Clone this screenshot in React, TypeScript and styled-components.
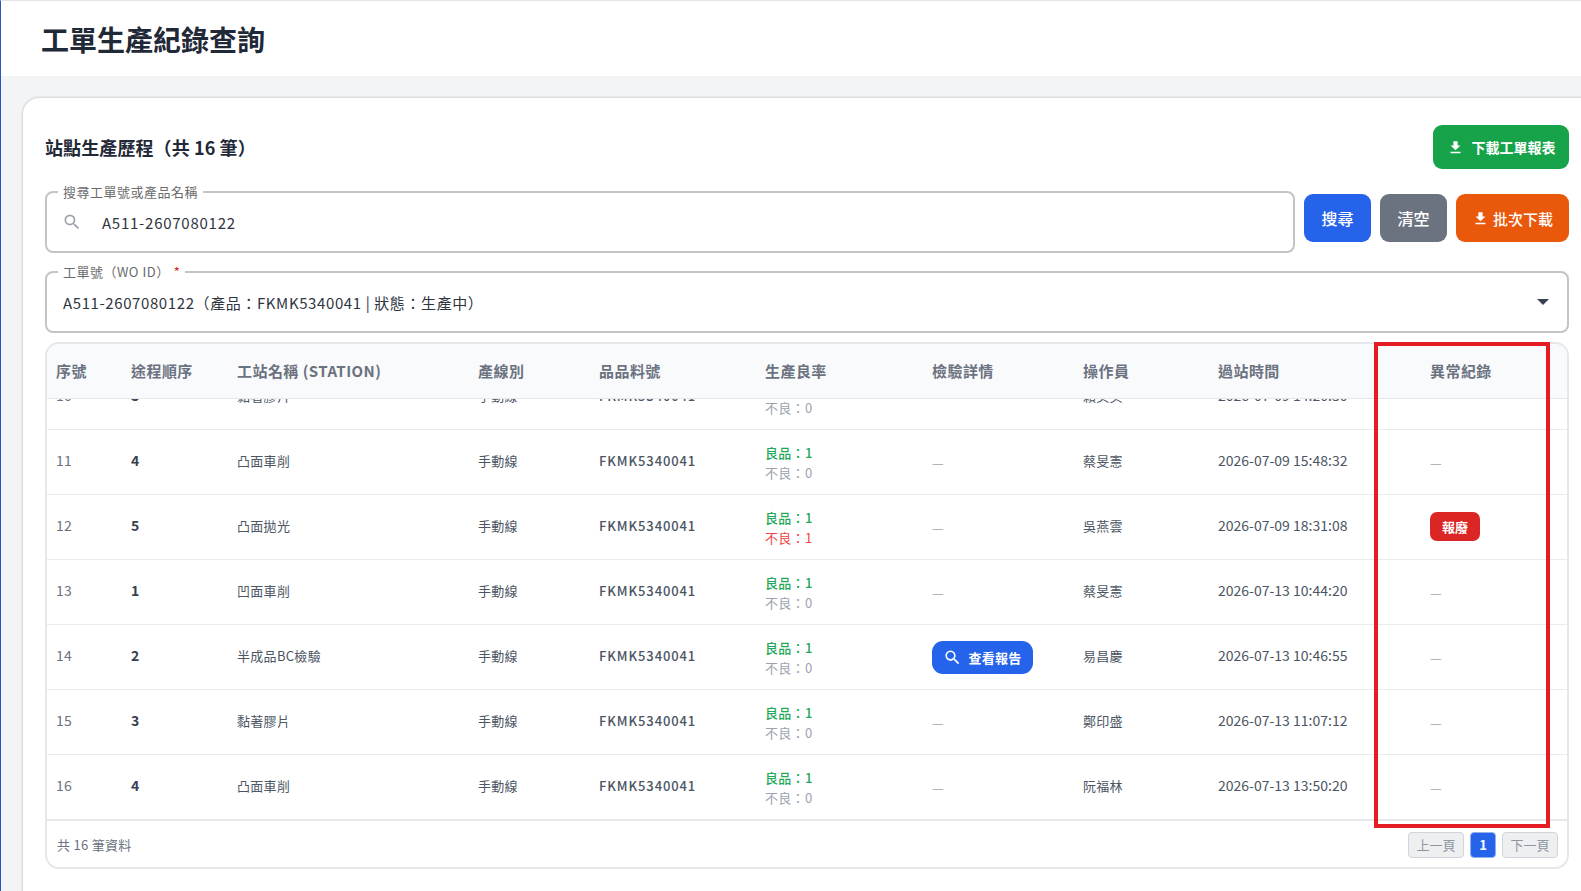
import React from "react";
import styled, { createGlobalStyle } from "styled-components";
import { MdDownload, MdSearch } from "react-icons/md";

const GlobalStyle = createGlobalStyle`
  html, body {
    margin: 0;
    padding: 0;
    height: 100%;
    overflow: hidden;
    background: #f3f4f6;
    font-family: "Noto Sans CJK TC", "Noto Sans", sans-serif;
  }
  * { box-sizing: border-box; }
`;

const Page = styled.div`
  width: 1581px;
  height: 891px;
  overflow: hidden;
  background: #f3f4f6;
  border-left: 1px solid #2b55c5;
  border-top: 1px solid #e5e5e8;
`;

const PageHeader = styled.header`
  height: 75px;
  background: #fff;
  display: flex;
  align-items: center;
  padding-left: 40px;
`;

const PageTitle = styled.h1`
  margin: 0;
  font-size: 28px;
  font-weight: 700;
  color: #1f2937;
`;

const Card = styled.main`
  margin: 22px 0 0 22px;
  width: 1580px;
  height: 900px;
  background: #fff;
  border-radius: 16px;
  box-shadow: 0 0 3px rgba(0, 0, 0, 0.28);
  padding: 27px 0 0 22px;
`;

const Inner = styled.div`
  width: 1524px;
`;

const TitleRow = styled.div`
  display: flex;
  justify-content: space-between;
  align-items: center;
  height: 44px;
  margin-bottom: 15px;
`;

const SectionTitle = styled.h2`
  margin: 0;
  font-size: 18px;
  font-weight: 700;
  color: #1f2937;
  letter-spacing: 0.1px;
`;

const ActionButton = styled.button<{ $bg: string; $w: number; $h: number; $size: number; $weight: number; $gap: number }>`
  width: ${(p) => p.$w}px;
  height: ${(p) => p.$h}px;
  background: ${(p) => p.$bg};
  border: 0;
  border-radius: 9px;
  color: #fff;
  font-family: inherit;
  font-size: ${(p) => p.$size}px;
  font-weight: ${(p) => p.$weight};
  display: inline-flex;
  align-items: center;
  justify-content: center;
  gap: ${(p) => p.$gap}px;
  padding: 0;
`;

const SearchRow = styled.div`
  display: flex;
  align-items: flex-start;
  gap: 9px;
  margin-bottom: 11px;
`;

const Field = styled.fieldset<{ $grow?: boolean }>`
  margin: 0;
  height: 69px;
  padding: 0 16px;
  border: 2px solid #c4c4c4;
  border-radius: 8px;
  display: flex;
  align-items: center;
  flex: ${(p) => (p.$grow ? "1" : "none")};
  min-width: 0;
`;

const Legend = styled.legend`
  padding: 0 5px;
  margin-left: -5px;
  font-size: 13px;
  line-height: 16px;
  color: #6b6b6b;
  letter-spacing: 0.5px;
`;

const Required = styled.span`
  color: #e02424;
  margin-left: 4px;
`;

const FieldText = styled.span<{ $up: number; $spacing: number }>`
  font-size: 15px;
  color: #2f3640;
  letter-spacing: ${(p) => p.$spacing}px;
  margin-top: -${(p) => p.$up}px;
`;

const FieldIcon = styled(MdSearch)`
  color: #9ca3af;
  margin: -7px 20px 0 -1px;
  flex: none;
`;

const Buttons = styled.div`
  display: flex;
  gap: 9px;
  padding-top: 10px;
`;

const Caret = styled.span`
  width: 0;
  height: 0;
  border-left: 6px solid transparent;
  border-right: 6px solid transparent;
  border-top: 6px solid #374151;
  margin: -7px 2px 0 auto;
`;

const TableWrap = styled.section`
  position: relative;
  margin-top: 9px;
`;

const TableBox = styled.div`
  height: 527px;
  border: 2px solid #e5e7eb;
  border-radius: 14px;
  overflow: hidden;
  display: flex;
  flex-direction: column;
  background: #fff;
`;

const columns = "74px 106px 241px 121px 165px 167px 150px 135px 211px 131px 19px";

const HeadRow = styled.div`
  display: grid;
  grid-template-columns: ${columns};
  height: 55px;
  flex: none;
  background: #f9fafb;
  border-bottom: 1px solid #e5e7eb;
  align-items: center;
`;

const HeadCell = styled.div<{ $pad: number }>`
  padding-left: ${(p) => p.$pad}px;
  padding-bottom: 2px;
  font-size: 15px;
  font-weight: 700;
  color: #6b7280;
  letter-spacing: 0.45px;
`;

const Body = styled.div`
  flex: 1;
  min-height: 0;
  overflow: hidden;
  display: flex;
  flex-direction: column;
  justify-content: flex-end;
`;

const Row = styled.div`
  display: grid;
  grid-template-columns: ${columns};
  height: 65px;
  flex: none;
  align-items: center;
  border-bottom: 1px solid #e9ebef;
`;

const Cell = styled.div<{ $pad: number }>`
  padding-left: ${(p) => p.$pad}px;
  padding-bottom: 4px;
  font-size: 13px;
  color: #4b5563;
  letter-spacing: 0.3px;
`;

const IndexCell = styled(Cell)`
  color: #6b7280;
  font-size: 14px;
`;

const StepCell = styled(Cell)`
  color: #374151;
  font-weight: 700;
  font-size: 14px;
`;

const PartCell = styled(Cell)`
  font-weight: 500;
  letter-spacing: 0.9px;
`;

const TimeCell = styled(Cell)`
  font-size: 14px;
  letter-spacing: 0;
`;

const YieldCell = styled(Cell)`
  padding-bottom: 0;
  padding-top: 1px;
`;

const Yield = styled.div`
  display: flex;
  flex-direction: column;
  line-height: 20px;
`;

const Good = styled.span`
  color: #22a958;
  font-weight: 500;
`;

const Bad = styled.span<{ $hit: boolean }>`
  color: ${(p) => (p.$hit ? "#ef4444" : "#9ca3af")};
`;

const Dash = styled.span`
  color: #9ca3af;
  display: block;
  position: relative;
  top: 2px;
`;

const ReportButton = styled.span`
  width: 101px;
  height: 33px;
  background: #2563eb;
  color: #fff;
  border-radius: 11px;
  font-weight: 700;
  display: inline-flex;
  align-items: center;
  justify-content: center;
  gap: 6px;
  position: relative;
  top: 2px;
`;

const ScrapBadge = styled.span`
  width: 50px;
  height: 29px;
  background: #dc2626;
  color: #fff;
  border-radius: 7px;
  font-size: 13px;
  font-weight: 700;
  letter-spacing: 0;
  display: inline-flex;
  align-items: center;
  justify-content: center;
  position: relative;
  top: 1px;
`;

const Footer = styled.div`
  height: 47px;
  flex: none;
  display: flex;
  align-items: center;
  justify-content: space-between;
  padding: 1px 9px 0 10px;
  border-top: 1px solid #e5e7eb;
`;

const FooterText = styled.span`
  font-size: 13px;
  color: #6b7280;
  letter-spacing: 0.3px;
`;

const Pager = styled.div`
  display: flex;
  gap: 6px;
  align-items: center;
`;

const PageButton = styled.span<{ $active?: boolean }>`
  height: 26px;
  min-width: ${(p) => (p.$active ? 26 : 56)}px;
  border-radius: 4px;
  border: 1px solid ${(p) => (p.$active ? "#93b0ea" : "#d1d5db")};
  background: ${(p) => (p.$active ? "#2563eb" : "#eeeff1")};
  color: ${(p) => (p.$active ? "#fff" : "#8f96a1")};
  font-size: 13px;
  font-weight: ${(p) => (p.$active ? 700 : 400)};
  display: inline-flex;
  align-items: center;
  justify-content: center;
`;

const Highlight = styled.div`
  position: absolute;
  left: 1329px;
  top: 0;
  width: 176px;
  height: 486px;
  border: 4px solid #e51c23;
  pointer-events: none;
`;

type Rec = {
  no: number;
  step: number;
  station: string;
  ng: number;
  op: string;
  time: string;
  report?: boolean;
  scrap?: boolean;
  blank?: boolean;
};

const rows: Rec[] = [
  { no: 10, step: 3, station: "黏著膠片", ng: 0, op: "賴美英", time: "2026-07-09 14:20:50", blank: true },
  { no: 11, step: 4, station: "凸面車削", ng: 0, op: "蔡旻憲", time: "2026-07-09 15:48:32" },
  { no: 12, step: 5, station: "凸面拋光", ng: 1, op: "吳燕雲", time: "2026-07-09 18:31:08", scrap: true },
  { no: 13, step: 1, station: "凹面車削", ng: 0, op: "蔡旻憲", time: "2026-07-13 10:44:20" },
  { no: 14, step: 2, station: "半成品BC檢驗", ng: 0, op: "易昌慶", time: "2026-07-13 10:46:55", report: true },
  { no: 15, step: 3, station: "黏著膠片", ng: 0, op: "鄭印盛", time: "2026-07-13 11:07:12" },
  { no: 16, step: 4, station: "凸面車削", ng: 0, op: "阮福林", time: "2026-07-13 13:50:20" },
];

const heads: [string, number][] = [
  ["序號", 9],
  ["途程順序", 10],
  ["工站名稱 (STATION)", 10],
  ["產線別", 10],
  ["品品料號", 10],
  ["生產良率", 11],
  ["檢驗詳情", 11],
  ["操作員", 12],
  ["過站時間", 12],
  ["異常紀錄", 13],
];

export default function App() {
  return (
    <>
      <GlobalStyle />
      <Page>
        <PageHeader>
          <PageTitle>工單生產紀錄查詢</PageTitle>
        </PageHeader>
        <Card>
          <Inner>
            <TitleRow>
              <SectionTitle>站點生產歷程（共 16 筆）</SectionTitle>
              <ActionButton $bg="#16a34a" $w={136} $h={44} $size={14} $weight={700} $gap={8}>
                <MdDownload size={17} />
                下載工單報表
              </ActionButton>
            </TitleRow>
            <SearchRow>
              <Field $grow>
                <Legend>搜尋工單號或產品名稱</Legend>
                <FieldIcon size={20} />
                <FieldText $up={7} $spacing={0.75}>A511-2607080122</FieldText>
              </Field>
              <Buttons>
                <ActionButton $bg="#2563eb" $w={67} $h={48} $size={16} $weight={500} $gap={0}>搜尋</ActionButton>
                <ActionButton $bg="#6b7280" $w={67} $h={48} $size={16} $weight={500} $gap={0}>清空</ActionButton>
                <ActionButton $bg="#ea580c" $w={113} $h={48} $size={15} $weight={500} $gap={4}>
                  <MdDownload size={17} />
                  批次下載
                </ActionButton>
              </Buttons>
            </SearchRow>
            <Field>
              <Legend>
                工單號（WO ID）<Required>*</Required>
              </Legend>
              <FieldText $up={7} $spacing={0.6}>A511-2607080122（產品：FKMK5340041 | 狀態：生產中）</FieldText>
              <Caret />
            </Field>
            <TableWrap>
              <TableBox>
                <HeadRow>
                  {heads.map(([h, pad]) => (
                    <HeadCell key={h} $pad={pad}>{h}</HeadCell>
                  ))}
                </HeadRow>
                <Body>
                  {rows.map((r) => (
                    <Row key={r.no}>
                      <IndexCell $pad={9}>{r.no}</IndexCell>
                      <StepCell $pad={10}>{r.step}</StepCell>
                      <Cell $pad={10}>{r.station}</Cell>
                      <Cell $pad={10}>手動線</Cell>
                      <PartCell $pad={10}>FKMK5340041</PartCell>
                      <YieldCell $pad={11}>
                        <Yield>
                          <Good>良品：1</Good>
                          <Bad $hit={r.ng > 0}>不良：{r.ng}</Bad>
                        </Yield>
                      </YieldCell>
                      <Cell $pad={11}>
                        {r.report ? (
                          <ReportButton>
                            <MdSearch size={19} />
                            查看報告
                          </ReportButton>
                        ) : (
                          !r.blank && <Dash>—</Dash>
                        )}
                      </Cell>
                      <Cell $pad={12}>{r.op}</Cell>
                      <TimeCell $pad={12}>{r.time}</TimeCell>
                      <Cell $pad={13}>
                        {r.scrap ? <ScrapBadge>報廢</ScrapBadge> : !r.blank && <Dash>—</Dash>}
                      </Cell>
                    </Row>
                  ))}
                </Body>
                <Footer>
                  <FooterText>共 16 筆資料</FooterText>
                  <Pager>
                    <PageButton>上一頁</PageButton>
                    <PageButton $active>1</PageButton>
                    <PageButton>下一頁</PageButton>
                  </Pager>
                </Footer>
              </TableBox>
              <Highlight />
            </TableWrap>
          </Inner>
        </Card>
      </Page>
    </>
  );
}
